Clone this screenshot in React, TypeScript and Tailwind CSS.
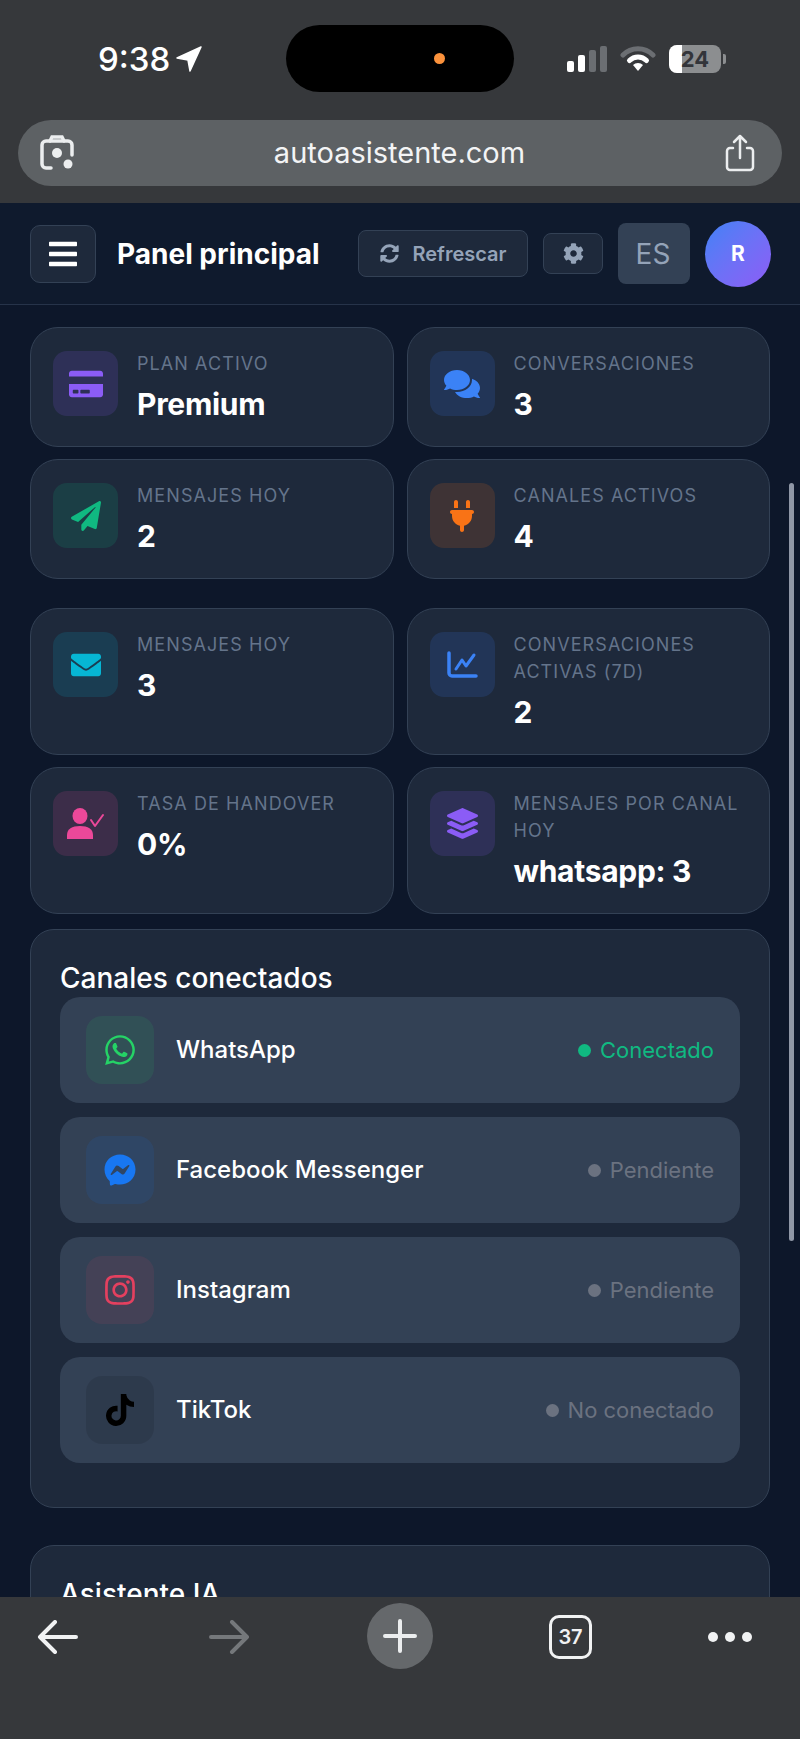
import React from 'react';
import {
  FaBars,
  FaCog,
  FaComments,
  FaCreditCard,
  FaEnvelope,
  FaFacebookMessenger,
  FaInstagram,
  FaLayerGroup,
  FaPaperPlane,
  FaSyncAlt,
  FaTiktok,
  FaWhatsapp,
} from 'react-icons/fa';
import { FaPlug } from 'react-icons/fa6';

function ChartIcon() {
  return (
    <svg viewBox="0 0 31 27" className="h-[27px] w-[31px] text-[#3b82f6]" fill="none" stroke="currentColor" strokeLinecap="round" strokeLinejoin="round">
      <path d="M2 2 V22 A3 3 0 0 0 5 25 H29" strokeWidth="3.500" />
      <path d="M9 18 L15 9 L19 15 L27 4" strokeWidth="3" />
    </svg>
  );
}

function UserCheckIcon() {
  return (
    <svg viewBox="0 0 38 31" className="h-[31px] w-[38px] text-[#ec4899]" fill="currentColor">
      <ellipse cx="13" cy="8" rx="7.500" ry="8" />
      <path d="M0 31 V27 C0 21 5 18 13 18 C21 18 26 21 26 27 V31 Z" />
      <path d="M24 12 L28 18 L36 7" fill="none" stroke="currentColor" strokeWidth="2" strokeLinecap="round" strokeLinejoin="round" />
    </svg>
  );
}

function StatCard({
  label,
  value,
  icon,
  tint,
}: {
  label: string;
  value: string;
  icon: React.ReactNode;
  tint: string;
}) {
  return (
    <div className="flex gap-[19px] rounded-[28px] border border-[#334155] bg-[#1e293b] px-[22px] pt-[23px] pb-[24px]">
      <div className={`flex h-[65px] w-[65px] shrink-0 items-center justify-center rounded-[14px] ${tint}`}>
        {icon}
      </div>
      <div className="-mt-px min-w-0">
        <div className="text-[18px] leading-[27px] tracking-[0.06em] text-[#64748b] uppercase">{label}</div>
        <div className="mt-[9px] text-[30px] leading-[36px] font-bold tracking-[-0.01em] text-white">{value}</div>
      </div>
    </div>
  );
}

function ChannelRow({
  name,
  status,
  icon,
  tint,
  dot,
  text,
}: {
  name: string;
  status: string;
  icon: React.ReactNode;
  tint: string;
  dot: string;
  text: string;
}) {
  return (
    <div className="flex h-[106px] items-center rounded-[20px] bg-[#334155] pr-[26px] pl-[26px]">
      <div className={`flex h-[68px] w-[68px] items-center justify-center rounded-[16px] ${tint}`}>{icon}</div>
      <div className="ml-[22px] flex-1 text-[24px] font-medium text-white">{name}</div>
      <div className={`flex items-center gap-[9px] text-[22px] ${text}`}>
        <span className={`h-[13px] w-[13px] rounded-full ${dot}`} />
        {status}
      </div>
    </div>
  );
}

function StatusBar() {
  return (
    <div className="flex h-[120px] items-start pt-[25px] pl-[98px]">
      <div className="mt-[15px] flex w-[188px] items-center gap-[6px] text-[33px] leading-[38px] font-medium text-white">
        9:38
        <svg viewBox="0 0 26 26" className="h-[26px] w-[26px]" fill="white" stroke="white" strokeWidth="1.500" strokeLinejoin="round">
          <path d="M25 1 L1 12 L12 14 L14 25 Z" />
        </svg>
      </div>
      <div className="flex h-[67px] w-[228px] items-center rounded-[34px] bg-black pl-[148px]">
        <span className="h-[11px] w-[11px] rounded-full bg-[#fb923c]" />
      </div>
      <div className="mt-[20px] ml-[53px] flex items-center gap-[13px]">
        <div className="flex h-[26px] items-end gap-[4px]">
          <span className="h-[11px] w-[7px] rounded-[2px] bg-white" />
          <span className="h-[17px] w-[7px] rounded-[2px] bg-white" />
          <span className="h-[22px] w-[7px] rounded-[2px] bg-[#6b6e72]" />
          <span className="h-[26px] w-[7px] rounded-[2px] bg-[#6b6e72]" />
        </div>
        <svg viewBox="0 0 36 26" className="h-[26px] w-[36px]" fill="none" strokeLinecap="round">
          <path d="M3 9 A21 21 0 0 1 33 9" stroke="#6b6e72" strokeWidth="5" />
          <path d="M9.500 14.500 A12 12 0 0 1 26.500 14.500" stroke="white" strokeWidth="5" />
          <path d="M18 25 L13 19 A7 7 0 0 1 23 19 Z" fill="white" />
        </svg>
        <div className="flex items-center gap-[2px]">
          <div className="relative h-[28px] w-[52px] overflow-hidden rounded-[8px] bg-[#8c8e90]">
            <div className="h-full w-[13px] bg-white" />
            <span className="absolute inset-0 flex items-center justify-center text-[22px] leading-none font-bold text-[#33353a]">
              24
            </span>
          </div>
          <span className="h-[10px] w-[3px] rounded-r-[2px] bg-[#8c8e90]" />
        </div>
      </div>
    </div>
  );
}

function UrlBar() {
  return (
    <div className="mx-[18px] flex h-[66px] items-center justify-between rounded-[33px] bg-[#5d6164] pr-[27px] pl-[22px]">
      <svg viewBox="0 0 34 36" className="h-[36px] w-[34px]" fill="none" stroke="#eceeef" strokeWidth="3.500" strokeLinecap="round">
        <path d="M10 6 L12 2 H22 L24 6" />
        <path d="M11 33 H6 A4 4 0 0 1 2 29 V10 A4 4 0 0 1 6 6 H28 A4 4 0 0 1 32 10 V20" />
        <circle cx="17" cy="18" r="5" fill="#eceeef" stroke="none" />
        <circle cx="28" cy="29" r="4.500" fill="#eceeef" stroke="none" />
      </svg>
      <span className="text-[29px] text-[#f3f4f5]">autoasistente.com</span>
      <svg viewBox="0 0 30 38" className="h-[38px] w-[30px]" fill="none" stroke="#eceeef" strokeWidth="2.500" strokeLinecap="round" strokeLinejoin="round">
        <path d="M8 14 H5 A3 3 0 0 0 2 17 V33 A3 3 0 0 0 5 36 H25 A3 3 0 0 0 28 33 V17 A3 3 0 0 0 25 14 H22" />
        <path d="M15 24 V2 M9 8 L15 2 L21 8" />
      </svg>
    </div>
  );
}

function Header() {
  return (
    <div className="flex h-[102px] shrink-0 items-center border-b border-[#263349] bg-[#0f1a2d] pr-[29px] pl-[30px]">
      <div className="flex h-[58px] w-[66px] items-center justify-center rounded-[10px] border border-[#334155] bg-[#1e293b]">
        <FaBars className="h-[32px] w-[30px] text-white" />
      </div>
      <div className="ml-[21px] text-[28px] font-bold text-white">Panel principal</div>
      <div className="ml-auto flex items-center">
        <div className="flex h-[47px] w-[170px] items-center justify-center gap-[14px] rounded-[8px] border border-[#334155] bg-[#1e293b] text-[20px] font-semibold text-[#94a3b8]">
          <FaSyncAlt className="h-[19px] w-[19px]" />
          Refrescar
        </div>
        <div className="ml-[15px] flex h-[41px] w-[60px] items-center justify-center rounded-[8px] border border-[#334155] bg-[#1e293b]">
          <FaCog className="h-[21px] w-[21px] text-[#94a3b8]" />
        </div>
        <div className="ml-[15px] flex h-[61px] w-[72px] items-center justify-center rounded-[8px] bg-[#334155] pr-[2px] text-[28px] text-[#94a3b8]">
          ES
        </div>
        <div className="ml-[15px] flex h-[66px] w-[66px] items-center justify-center rounded-full bg-gradient-to-br from-[#3b82f6] to-[#8b5cf6] text-[21px] font-bold text-white">
          R
        </div>
      </div>
    </div>
  );
}

function BottomBar() {
  return (
    <div className="flex h-[142px] shrink-0 items-start bg-[#36383b] pt-[6px] pl-[37px]">
      <svg viewBox="0 0 41 34" className="mt-[17px] h-[34px] w-[41px]" fill="none" stroke="#f1f2f3" strokeWidth="4" strokeLinecap="round" strokeLinejoin="round">
        <path d="M39 17 H3 M18 2 L3 17 L18 32" />
      </svg>
      <svg viewBox="0 0 41 34" className="mt-[17px] ml-[131px] h-[34px] w-[41px]" fill="none" stroke="#75787b" strokeWidth="4" strokeLinecap="round" strokeLinejoin="round">
        <path d="M2 17 H38 M23 2 L38 17 L23 32" />
      </svg>
      <div className="ml-[117px] flex h-[66px] w-[66px] items-center justify-center rounded-full bg-[#65686b]">
        <svg viewBox="0 0 34 34" className="h-[34px] w-[34px]" fill="none" stroke="#eceeef" strokeWidth="4" strokeLinecap="round">
          <path d="M17 2 V32 M2 17 H32" />
        </svg>
      </div>
      <div className="mt-[12px] ml-[116px] flex h-[44px] w-[43px] items-center justify-center rounded-[10px] border-[3px] border-[#f1f2f3] text-[20px] font-semibold text-[#f1f2f3]">
        37
      </div>
      <div className="mt-[29px] ml-[116px] flex gap-[7px]">
        <span className="h-[10px] w-[10px] rounded-full bg-[#f1f2f3]" />
        <span className="h-[10px] w-[10px] rounded-full bg-[#f1f2f3]" />
        <span className="h-[10px] w-[10px] rounded-full bg-[#f1f2f3]" />
      </div>
    </div>
  );
}

export default function App() {
  return (
    <div className="flex h-[1739px] w-[800px] flex-col overflow-hidden bg-[#0d172a] [font-family:Inter,sans-serif]">
      <div className="h-[203px] shrink-0 bg-[#36383b]">
        <StatusBar />
        <UrlBar />
      </div>
      <Header />
      <div className="relative flex-1 overflow-hidden px-[30px] pt-[22px]">
        <div className="absolute top-[178px] right-[6px] h-[758px] w-[5px] rounded-full bg-[#8f97a6]" />

        <div className="grid grid-cols-2 gap-x-[13px] gap-y-[12px]">
          <StatCard label="Plan activo" value="Premium" tint="bg-[#8b5cf6]/15" icon={<FaCreditCard className="h-[34px] w-[34px] text-[#8b5cf6]" />} />
          <StatCard label="Conversaciones" value="3" tint="bg-[#3b82f6]/15" icon={<FaComments className="h-[36px] w-[36px] text-[#3b82f6]" />} />
          <StatCard label="Mensajes hoy" value="2" tint="bg-[#10b981]/15" icon={<FaPaperPlane className="h-[30px] w-[30px] text-[#10b981]" />} />
          <StatCard label="Canales activos" value="4" tint="bg-[#f97316]/15" icon={<FaPlug className="h-[32px] w-[32px] text-[#f97316]" />} />
        </div>

        <div className="mt-[29px] grid grid-cols-2 gap-x-[13px] gap-y-[12px]">
          <StatCard label="Mensajes hoy" value="3" tint="bg-[#06b6d4]/15" icon={<FaEnvelope className="h-[30px] w-[30px] text-[#06b6d4]" />} />
          <StatCard label="Conversaciones activas (7d)" value="2" tint="bg-[#3b82f6]/15" icon={<ChartIcon />} />
          <StatCard label="Tasa de handover" value="0%" tint="bg-[#ec4899]/15" icon={<UserCheckIcon />} />
          <StatCard label="Mensajes por canal hoy" value="whatsapp: 3" tint="bg-[#8b5cf6]/15" icon={<FaLayerGroup className="h-[31px] w-[31px] text-[#8b5cf6]" />} />
        </div>

        <div className="mt-[15px] rounded-[24px] border border-[#334155] bg-[#1e293b] px-[29px] pt-[30px] pb-[44px]">
          <div className="text-[28px] leading-[37px] font-medium text-white">Canales conectados</div>
          <div className="flex flex-col gap-[14px]">
            <ChannelRow name="WhatsApp" status="Conectado" tint="bg-[#25d366]/10" dot="bg-[#10b981]" text="text-[#10b981]" icon={<FaWhatsapp className="h-[34px] w-[34px] text-[#25d366]" />} />
            <ChannelRow name="Facebook Messenger" status="Pendiente" tint="bg-[#1877f2]/10" dot="bg-[#6b7280]" text="text-[#6b7280]" icon={<FaFacebookMessenger className="h-[32px] w-[32px] text-[#1877f2]" />} />
            <ChannelRow name="Instagram" status="Pendiente" tint="bg-[#e4405f]/10" dot="bg-[#6b7280]" text="text-[#6b7280]" icon={<FaInstagram className="h-[34px] w-[34px] text-[#e4405f]" />} />
            <ChannelRow name="TikTok" status="No conectado" tint="bg-[#000000]/10" dot="bg-[#6b7280]" text="text-[#6b7280]" icon={<FaTiktok className="h-[32px] w-[32px] text-black" />} />
          </div>
        </div>

        <div className="mt-[37px] rounded-[24px] border border-[#334155] bg-[#1e293b] px-[29px] pt-[30px] pb-[44px]">
          <div className="text-[28px] leading-[37px] font-medium text-white">Asistente IA</div>
        </div>
      </div>
      <BottomBar />
    </div>
  );
}
